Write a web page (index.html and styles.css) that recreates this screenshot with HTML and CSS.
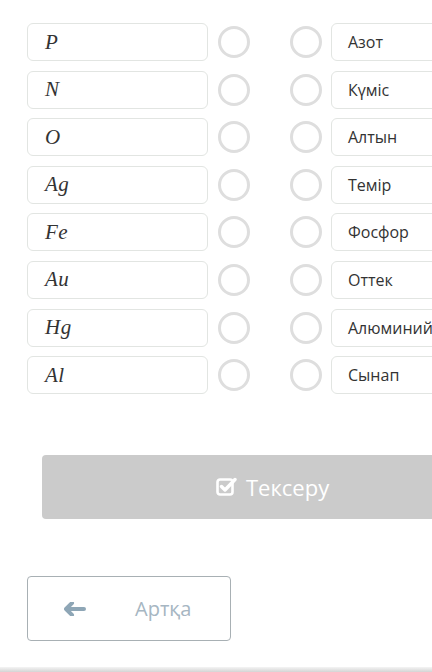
FILE: index.html
```html
<!DOCTYPE html>
<html>
<head>
<meta charset="utf-8">
<link rel="stylesheet" href="styles.css">
</head>
<body>
<div class="page">
  <div class="match">
    <div class="row"><div class="box math">P</div><span class="dot"></span><span class="dot dot2"></span><div class="box word">Азот</div></div>
    <div class="row"><div class="box math">N</div><span class="dot"></span><span class="dot dot2"></span><div class="box word">Күміс</div></div>
    <div class="row"><div class="box math">O</div><span class="dot"></span><span class="dot dot2"></span><div class="box word">Алтын</div></div>
    <div class="row"><div class="box math">Ag</div><span class="dot"></span><span class="dot dot2"></span><div class="box word">Темір</div></div>
    <div class="row"><div class="box math">Fe</div><span class="dot"></span><span class="dot dot2"></span><div class="box word">Фосфор</div></div>
    <div class="row"><div class="box math">Au</div><span class="dot"></span><span class="dot dot2"></span><div class="box word">Оттек</div></div>
    <div class="row"><div class="box math">Hg</div><span class="dot"></span><span class="dot dot2"></span><div class="box word">Алюминий</div></div>
    <div class="row"><div class="box math">Al</div><span class="dot"></span><span class="dot dot2"></span><div class="box word">Сынап</div></div>
  </div>
  <div class="check">
    <svg class="check-icon" width="21" height="19" viewBox="0 0 21 19">
      <rect x="1.5" y="2.5" width="15" height="15" rx="2.5" fill="none" stroke="#fff" stroke-width="2.6"/>
      <path d="M5.5 9.5 L9 13 L19 2.5" fill="none" stroke="#fff" stroke-width="3.4" stroke-linecap="round" stroke-linejoin="round"/>
    </svg>
    <span>Тексеру</span>
  </div>
  <div class="back">
    <svg class="arrow" width="22" height="14" viewBox="0 0 22 14">
      <path d="M8 1 L2 7 L8 13 M2 7 H20" fill="none" stroke="#8ea6b6" stroke-width="4" stroke-linecap="round" stroke-linejoin="round"/>
    </svg>
    <span>Артқа</span>
  </div>
  <div class="foot"></div>
</div>
</body>
</html>
```
FILE: styles.css
```css
html, body {
  margin: 0;
  padding: 0;
  background: #fff;
  overflow: hidden;
}
.page {
  width: 432px;
  height: 672px;
  position: relative;
  overflow: hidden;
  font-family: "Open Sans", "Noto Sans", sans-serif;
}
.match {
  padding: 23px 0 0 27px;
  display: flex;
  flex-direction: column;
  gap: 9.6px;
}
.row {
  display: flex;
  align-items: center;
  height: 38px;
}
.box {
  flex: none;
  box-sizing: border-box;
  height: 38px;
  border: 1px solid #e2e5e2;
  border-radius: 6px;
  display: flex;
  align-items: center;
  background: #fff;
}
.math {
  width: 181px;
  padding-left: 17px;
  font-family: "Liberation Serif", "DejaVu Serif", serif;
  font-style: italic;
  font-size: 21px;
  color: #333;
  letter-spacing: 0.5px;
}
.dot {
  flex: none;
  box-sizing: border-box;
  width: 32px;
  height: 32px;
  border: 3px solid #dedede;
  border-radius: 50%;
  margin-left: 10px;
}
.dot2 {
  margin-left: 40px;
}
.word {
  width: 140px;
  margin-left: 9px;
  padding-left: 16px;
  font-size: 16px;
  color: #333;
}
.check {
  flex: none;
  margin: 61px 0 0 42px;
  width: 420px;
  height: 64px;
  background: #cbcbcb;
  border-radius: 4px;
  display: flex;
  align-items: center;
  padding-left: 174px;
  box-sizing: border-box;
  color: #fff;
  font-size: 22px;
}
.check-icon {
  margin-right: 9px;
  margin-top: -2px;
}
.back {
  margin: 57px 0 0 27px;
  box-sizing: border-box;
  width: 204px;
  height: 65px;
  border: 1px solid #a8b0b4;
  border-radius: 4px;
  display: flex;
  align-items: center;
  padding-left: 36px;
  color: #a6b6c2;
  font-size: 20px;
}
.arrow {
  margin-right: 49px;
}
.foot {
  position: absolute;
  left: 0;
  right: 0;
  bottom: 0;
  height: 5px;
  background: linear-gradient(#f4f4f4, #d4d4d4);
}
```
